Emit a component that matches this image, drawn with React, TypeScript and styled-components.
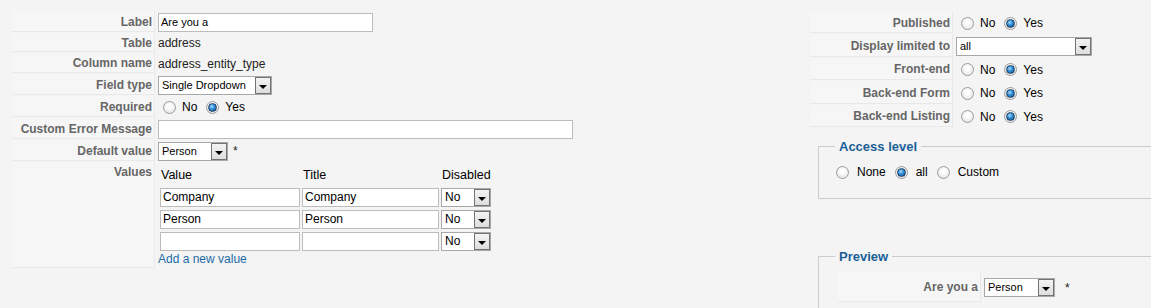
import React from "react";
import styled, { createGlobalStyle } from "styled-components";

const GlobalStyle = createGlobalStyle`
  html, body {
    margin: 0;
    padding: 0;
    overflow: hidden;
    background: #f4f4f4;
  }

  body {
    font-family: "Liberation Sans", Arial, sans-serif;
    font-size: 12px;
    line-height: 14px;
    color: #222;
  }

  * {
    box-sizing: border-box;
  }
`;

const Page = styled.div`
  display: flex;
  align-items: flex-start;
  padding: 11px 0 0 12px;
  width: 1170px;
`;

const LeftColumn = styled.div`
  flex: none;
  width: 798px;
`;

const RightColumn = styled.div`
  flex: none;
  width: 360px;
  padding-top: 1px;
`;

const Table = styled.div`
  display: flex;
  flex-direction: column;
  gap: 1px;
`;

const Row = styled.div`
  display: flex;
  align-items: stretch;
`;

const Key = styled.div<{ $top?: boolean }>`
  flex: none;
  width: 143px;
  display: flex;
  justify-content: flex-end;
  align-items: ${(p) => (p.$top ? "flex-start" : "center")};
  padding: ${(p) => (p.$top ? "3px 2px 0 0" : "1px 2px 0 0")};
  background: #f6f6f6;
  border-right: 1px solid #e9e9e9;
  border-bottom: 1px solid #e9e9e9;
  color: #666;
  font-weight: bold;
  white-space: nowrap;
`;

const Value = styled.div<{ $h?: number }>`
  display: flex;
  align-items: center;
  height: ${(p) => (p.$h ? `${p.$h}px` : "auto")};
  padding: 1px 3px 0;
  white-space: nowrap;
`;

const ValuesCell = styled.div`
  padding: 0 3px 1px;
`;

const TextInput = styled.div<{ $w: number; $big?: boolean }>`
  width: ${(p) => p.$w}px;
  height: 19px;
  padding: 0 2px;
  border: 1px solid #bcbcbc;
  background: #fff;
  color: #000;
  font-size: ${(p) => (p.$big ? 12 : 11)}px;
  line-height: 17px;
  overflow: hidden;
  white-space: nowrap;
`;

const SelectBox = styled.div<{ $w: number }>`
  display: inline-flex;
  flex: none;
  width: ${(p) => p.$w}px;
  height: 19px;
  border: 1px solid #a8a8a8;
  background: #fff;
`;

const SelectText = styled.span<{ $big?: boolean }>`
  flex: 1;
  padding-left: 3px;
  color: #000;
  font-size: ${(p) => (p.$big ? 12 : 11)}px;
  line-height: 17px;
  overflow: hidden;
`;

const SelectButton = styled.span`
  flex: none;
  width: 16px;
  display: flex;
  align-items: center;
  justify-content: center;
  border: 1px solid #737373;
  background: linear-gradient(#f3f3f3, #dedede);
`;

const Arrow = styled.span`
  width: 0;
  height: 0;
  margin-top: 3px;
  border-left: 4px solid transparent;
  border-right: 4px solid transparent;
  border-top: 4px solid #000;
`;

const Star = styled.span<{ $gap: number }>`
  margin-left: ${(p) => p.$gap}px;
  color: #222;
`;

const RadioOption = styled.span<{ $gap?: number }>`
  display: inline-flex;
  align-items: center;
  gap: ${(p) => p.$gap ?? 6}px;
  margin: 0 4px 0 5px;
  color: #000;
`;

const RadioDot = styled.span<{ $on?: boolean }>`
  flex: none;
  width: 13px;
  height: 13px;
  border-radius: 50%;
  border: 1px solid #9c9c9c;
  background: radial-gradient(circle at 50% 40%, #ffffff 20%, #dcdcdc 100%);
  display: flex;
  align-items: center;
  justify-content: center;

  &::after {
    content: "";
    display: ${(p) => (p.$on ? "block" : "none")};
    width: 7px;
    height: 7px;
    border-radius: 50%;
    border: 1px solid #243f5c;
    background: radial-gradient(circle at 40% 35%, #a9dcff 0%, #2b8ad6 45%, #0d4a86 100%);
  }
`;

const ValuesGrid = styled.div`
  display: grid;
  grid-template-columns: 140px 137px 50px;
  column-gap: 2px;
  row-gap: 3px;
  margin-left: 2px;
`;

const ColHead = styled.div`
  padding: 6px 0 2px 1px;
  font-size: 12.5px;
  line-height: 15px;
  color: #000;
`;

const AddLink = styled.a`
  display: block;
  margin-top: 1px;
  line-height: 15px;
  color: #1e6ca8;
  text-decoration: none;
`;

const Fieldset = styled.fieldset<{ $mt: number }>`
  margin: ${(p) => p.$mt}px 0 0 8px;
  padding: 0 12px 16px;
  border: 1px solid #cccccc;
  min-width: 0;
`;

const Legend = styled.legend`
  margin-left: 4px;
  padding: 0 4px;
  color: #1a5f99;
  font-size: 13px;
  font-weight: bold;
  line-height: 15px;
`;

const RadioLine = styled.div`
  display: flex;
  align-items: center;
  height: 20px;
  margin-top: 8px;
`;

const PreviewRow = styled(Row)`
  margin: 8px 0 0 7px;
  height: 30px;
`;

interface SelectProps {
  width: number;
  value: string;
  big?: boolean;
}

function Select({ width, value, big }: SelectProps) {
  return (
    <SelectBox $w={width}>
      <SelectText $big={big}>{value}</SelectText>
      <SelectButton>
        <Arrow />
      </SelectButton>
    </SelectBox>
  );
}

function Radio({ label, on, gap }: { label: string; on?: boolean; gap?: number }) {
  return (
    <RadioOption $gap={gap}>
      <RadioDot $on={on} />
      {label}
    </RadioOption>
  );
}

function YesNo() {
  return (
    <>
      <Radio label="No" />
      <Radio label="Yes" on />
    </>
  );
}

const valueRows = [
  { value: "Company", title: "Company" },
  { value: "Person", title: "Person" },
  { value: "", title: "" },
];

export default function App() {
  return (
    <>
      <GlobalStyle />
      <Page>
        <LeftColumn>
          <Table>
            <Row>
              <Key>Label</Key>
              <Value $h={21}>
                <TextInput $w={215}>Are you a</TextInput>
              </Value>
            </Row>
            <Row>
              <Key>Table</Key>
              <Value $h={19}>address</Value>
            </Row>
            <Row>
              <Key>Column name</Key>
              <Value $h={20}>address_entity_type</Value>
            </Row>
            <Row>
              <Key>Field type</Key>
              <Value $h={21}>
                <Select width={114} value="Single Dropdown" />
              </Value>
            </Row>
            <Row>
              <Key>Required</Key>
              <Value $h={21}>
                <YesNo />
              </Value>
            </Row>
            <Row>
              <Key>Custom Error Message</Key>
              <Value $h={21}>
                <TextInput $w={415} />
              </Value>
            </Row>
            <Row>
              <Key>Default value</Key>
              <Value $h={21}>
                <Select width={70} value="Person" />
                <Star $gap={5}>*</Star>
              </Value>
            </Row>
            <Row>
              <Key $top>Values</Key>
              <ValuesCell>
                <ValuesGrid>
                  <ColHead>Value</ColHead>
                  <ColHead>Title</ColHead>
                  <ColHead>Disabled</ColHead>
                  {valueRows.map((r, i) => (
                    <React.Fragment key={i}>
                      <TextInput $w={140} $big>
                        {r.value}
                      </TextInput>
                      <TextInput $w={137} $big>
                        {r.title}
                      </TextInput>
                      <Select width={50} value="No" big />
                    </React.Fragment>
                  ))}
                </ValuesGrid>
                <AddLink href="#">Add a new value</AddLink>
              </ValuesCell>
            </Row>
          </Table>
        </LeftColumn>

        <RightColumn>
          <Table>
            <Row>
              <Key>Published</Key>
              <Value $h={21}>
                <YesNo />
              </Value>
            </Row>
            <Row>
              <Key>Display limited to</Key>
              <Value $h={23}>
                <Select width={136} value="all" />
              </Value>
            </Row>
            <Row>
              <Key>Front-end</Key>
              <Value $h={22}>
                <YesNo />
              </Value>
            </Row>
            <Row>
              <Key>Back-end Form</Key>
              <Value $h={23}>
                <YesNo />
              </Value>
            </Row>
            <Row>
              <Key>Back-end Listing</Key>
              <Value $h={22}>
                <YesNo />
              </Value>
            </Row>
          </Table>

          <Fieldset $mt={12}>
            <Legend>Access level</Legend>
            <RadioLine>
              <Radio label="None" gap={8} />
              <Radio label="all" on gap={8} />
              <Radio label="Custom" gap={8} />
            </RadioLine>
          </Fieldset>

          <Fieldset $mt={50}>
            <Legend>Preview</Legend>
            <PreviewRow>
              <Key>Are you a</Key>
              <Value>
                <Select width={71} value="Person" />
                <Star $gap={10}>*</Star>
              </Value>
            </PreviewRow>
          </Fieldset>
        </RightColumn>
      </Page>
    </>
  );
}
